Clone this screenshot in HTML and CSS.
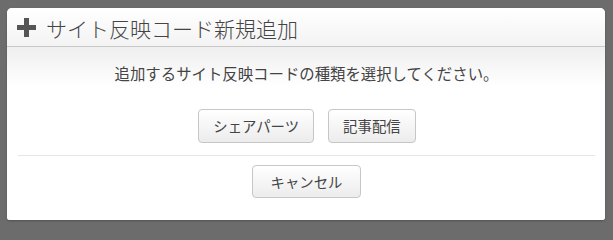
FILE: index.html
```html
<!DOCTYPE html>
<html lang="ja">
<head>
<meta charset="utf-8">
<title>サイト反映コード新規追加</title>
<link rel="stylesheet" href="styles.css">
</head>
<body>
<div class="backdrop">
  <div class="dialog">
    <div class="dialog-header">
      <svg class="plus-icon" width="19" height="19" viewBox="0 0 19 19" aria-hidden="true">
        <rect x="7" y="0" width="5" height="19" fill="#555"/>
        <rect x="0" y="7" width="19" height="5" fill="#555"/>
      </svg>
      <h1 class="dialog-title">サイト反映コード新規追加</h1>
    </div>
    <div class="dialog-body">
      <p class="message">追加するサイト反映コードの種類を選択してください。</p>
      <div class="choice-row">
        <button class="btn">シェアパーツ</button>
        <button class="btn">記事配信</button>
      </div>
      <hr class="divider">
      <div class="cancel-row">
        <button class="btn btn-cancel">キャンセル</button>
      </div>
    </div>
  </div>
</div>
</body>
</html>
```
FILE: styles.css
```css
html, body {
  margin: 0;
  padding: 0;
}
body {
  background: #6c6c6c;
  font-family: "Noto Sans CJK JP", "Noto Sans", "Liberation Sans", sans-serif;
  width: 613px;
  height: 227px;
  overflow: hidden;
}
.backdrop {
  padding: 8px 0 0 7px;
}
.dialog {
  width: 598px;
  height: 212px;
  background: #ffffff;
  border-radius: 5px 5px 3px 3px;
  overflow: hidden;
  box-shadow: 0 1px 2px rgba(0,0,0,0.25);
}
.dialog-header {
  height: 39px;
  box-sizing: border-box;
  border-bottom: 1px solid #c9c9c9;
  background: linear-gradient(#ffffff, #f3f3f3);
  display: flex;
  align-items: center;
  padding-left: 10px;
  padding-top: 1px;
}
.plus-icon {
  flex: none;
  margin-right: 10px;
}
.dialog-title {
  margin: 0;
  font-size: 21px;
  font-weight: 300;
  color: #444;
  line-height: 26px;
}
.dialog-body {
  background: linear-gradient(#efefef 0px, #ffffff 40px);
  height: 173px;
  padding: 0 10px 0 11px;
}
.message {
  margin: 0;
  padding-top: 16px;
  text-align: center;
  font-size: 15.4px;
  line-height: 20px;
  color: #444;
}
.choice-row {
  display: flex;
  justify-content: center;
  gap: 14px;
  margin-top: 26px;
  padding-left: 1px;
}
.btn {
  font-family: inherit;
  font-size: 14.4px;
  color: #444;
  background: linear-gradient(#ffffff, #ececec);
  border: 1px solid #c6c6c6;
  border-radius: 4px;
  height: 34px;
  padding: 0 14px;
  line-height: 20px;
  box-shadow: inset 0 1px 0 #fff;
}
.divider {
  border: 0;
  border-top: 1px solid #e6e6e6;
  margin: 12px 0 0 0;
  height: 0;
}
.cancel-row {
  display: flex;
  justify-content: center;
  margin-top: 9px;
}
.btn-cancel {
  height: 33px;
  padding: 0 18px;
}
```
